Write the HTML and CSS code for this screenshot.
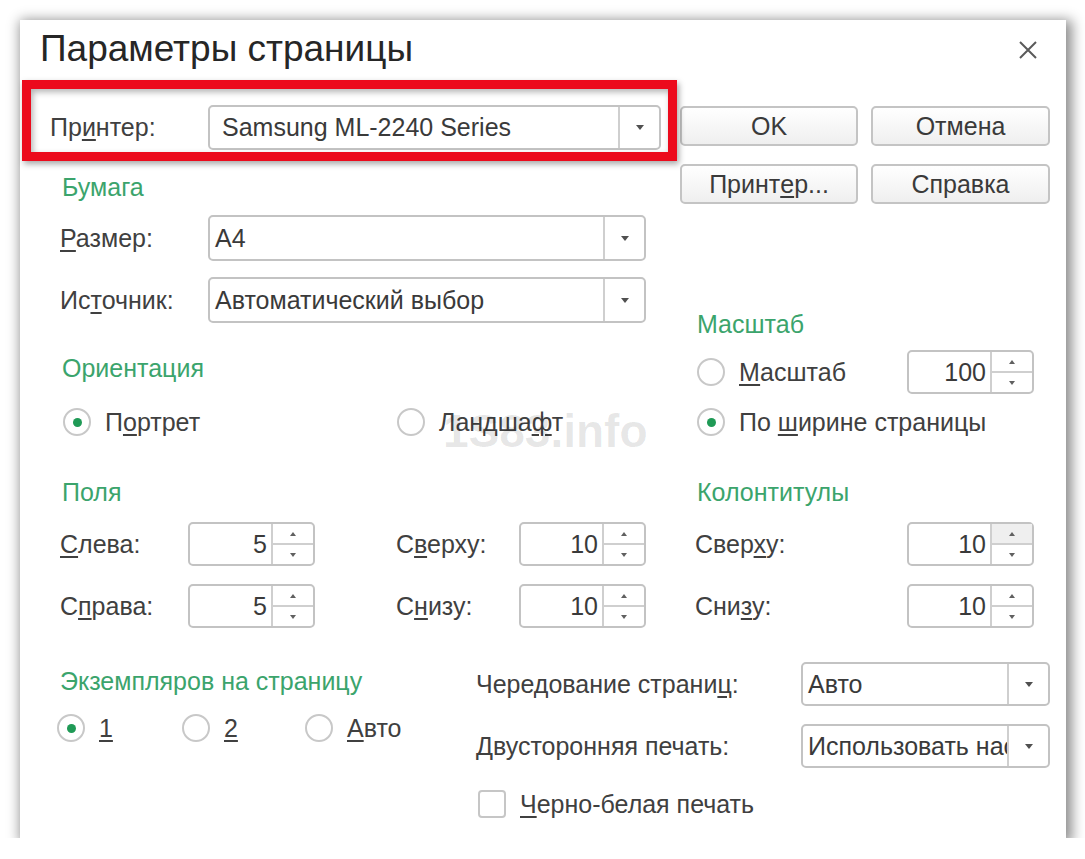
FILE: index.html
```html
<!DOCTYPE html>
<html lang="ru">
<head>
<meta charset="utf-8">
<title>Параметры страницы</title>
<link rel="stylesheet" href="styles.css">
</head>
<body>
<div class="dialog">
  <div class="header">
    <h1 class="title">Параметры страницы</h1>
    <div class="close">
      <svg width="20" height="20" viewBox="0 0 20 20"><path d="M2 2 L18 18 M18 2 L2 18" stroke="#5a5a5a" stroke-width="2" fill="none"/></svg>
    </div>
  </div>

  <div class="top">
    <div class="col-left">
      <div class="printer-row">
        <span class="label printer-label">Пр<u>и</u>нтер:</span>
        <div class="combo combo-printer"><span class="combo-text pad-l">Samsung ML-2240 Series</span><span class="combo-btn"><i class="tri-down"></i></span></div>
      </div>

      <div class="group-title g-paper">Бумага</div>
      <div class="field-row r-size">
        <span class="label w148"><u>Р</u>азмер:</span>
        <div class="combo combo-wide"><span class="combo-text">А4</span><span class="combo-btn"><i class="tri-down"></i></span></div>
      </div>
      <div class="field-row r-src">
        <span class="label w148">Ис<u>т</u>очник:</span>
        <div class="combo combo-wide"><span class="combo-text">Автоматический выбор</span><span class="combo-btn"><i class="tri-down"></i></span></div>
      </div>

      <div class="group-title g-orient">Ориентация</div>
      <div class="radio-row r-orient">
        <div class="radio-item w334"><span class="radio on"></span><span class="rtext">П<u>о</u>ртрет</span></div>
        <div class="radio-item"><span class="radio"></span><span class="rtext">Ландша<u>ф</u>т</span></div>
      </div>

      <div class="group-title g-fields">Поля</div>
      <div class="field-row r-m1">
        <span class="label w128"><u>С</u>лева:</span>
        <div class="spin"><span class="spin-val">5</span><span class="spin-btns"><span class="sb"><i class="tri-up"></i></span><span class="sb"><i class="tri-dn"></i></span></span></div>
        <span class="label w123 gap81">С<u>в</u>ерху:</span>
        <div class="spin"><span class="spin-val">10</span><span class="spin-btns"><span class="sb"><i class="tri-up"></i></span><span class="sb"><i class="tri-dn"></i></span></span></div>
      </div>
      <div class="field-row r-m2">
        <span class="label w128">С<u>п</u>рава:</span>
        <div class="spin"><span class="spin-val">5</span><span class="spin-btns"><span class="sb"><i class="tri-up"></i></span><span class="sb"><i class="tri-dn"></i></span></span></div>
        <span class="label w123 gap81">С<u>н</u>изу:</span>
        <div class="spin"><span class="spin-val">10</span><span class="spin-btns"><span class="sb"><i class="tri-up"></i></span><span class="sb"><i class="tri-dn"></i></span></span></div>
      </div>
    </div>

    <div class="col-right">
      <div class="buttons">
        <div class="btn">OK</div>
        <div class="btn">Отмена</div>
        <div class="btn">Принт<u>е</u>р...</div>
        <div class="btn">Справка</div>
      </div>

      <div class="group-title rg g-scale">Масштаб</div>
      <div class="radio-row r-scale1">
        <div class="radio-item w210"><span class="radio"></span><span class="rtext"><u>М</u>асштаб</span></div>
        <div class="spin"><span class="spin-val">100</span><span class="spin-btns"><span class="sb"><i class="tri-up"></i></span><span class="sb"><i class="tri-dn"></i></span></span></div>
      </div>
      <div class="radio-row r-scale2">
        <div class="radio-item"><span class="radio on"></span><span class="rtext">По <u>ш</u>ирине страницы</span></div>
      </div>

      <div class="group-title rg g-hf">Колонтитулы</div>
      <div class="field-row hf r-h1">
        <span class="label w212">Свер<u>х</u>у:</span>
        <div class="spin"><span class="spin-val">10</span><span class="spin-btns"><span class="sb hover"><i class="tri-up"></i></span><span class="sb"><i class="tri-dn"></i></span></span></div>
      </div>
      <div class="field-row hf r-h2">
        <span class="label w212">Сни<u>з</u>у:</span>
        <div class="spin"><span class="spin-val">10</span><span class="spin-btns"><span class="sb"><i class="tri-up"></i></span><span class="sb"><i class="tri-dn"></i></span></span></div>
      </div>
    </div>
  </div>

  <div class="bottom">
    <div class="bottom-left">
      <div class="group-title g-copies">Экземпляров на страницу</div>
      <div class="radio-row r-copies">
        <div class="radio-item w125"><span class="radio on"></span><span class="rtext"><u>1</u></span></div>
        <div class="radio-item w123r"><span class="radio"></span><span class="rtext"><u>2</u></span></div>
        <div class="radio-item"><span class="radio"></span><span class="rtext"><u>А</u>вто</span></div>
      </div>
    </div>
    <div class="bottom-right">
      <div class="field-row br r-alt">
        <span class="label w325">Чередование страни<u>ц</u>:</span>
        <div class="combo combo-small"><span class="combo-text">Авто</span><span class="combo-btn"><i class="tri-down"></i></span></div>
      </div>
      <div class="field-row br r-duplex">
        <span class="label w325">Двусторонняя печать:</span>
        <div class="combo combo-small"><span class="combo-text">Использовать настройки принтера</span><span class="combo-btn"><i class="tri-down"></i></span></div>
      </div>
      <div class="check-row">
        <span class="checkbox"></span><span class="rtext"><u>Ч</u>ерно-белая печать</span>
      </div>
    </div>
  </div>

  <div class="watermark">1S83.info</div>
  <div class="highlight"></div>
</div>
</body>
</html>
```

FILE: styles.css
```css
html, body {
  margin: 0;
  padding: 0;
  background: #ffffff;
}
body {
  font-family: "Liberation Sans", Arial, sans-serif;
  font-size: 25px;
  color: #404040;
}
u {
  text-decoration: underline;
  text-underline-offset: 3px;
  text-decoration-thickness: 2px;
}

.dialog {
  position: relative;
  width: 1046px;
  height: 818px;
  margin: 20px 0 0 20px;
  background: #ffffff;
  box-shadow: 3px 3px 12px 3px rgba(0, 0, 0, 0.45);
}

.header {
  height: 85px;
  display: flex;
  justify-content: space-between;
  align-items: flex-start;
}
.title {
  margin: 10px 0 0 20px;
  font-size: 37px;
  line-height: 37px;
  font-weight: normal;
  color: #262626;
}
.close {
  margin: 20px 28px 0 0;
  width: 20px;
  height: 20px;
}
.close svg { display: block; }

.top {
  display: grid;
  grid-template-columns: 660px 386px;
}
.col-left, .col-right {
  display: flex;
  flex-direction: column;
}

.label {
  white-space: nowrap;
  flex: none;
}
.w148 { width: 148px; }
.w128 { width: 128px; }
.w123 { width: 123px; }
.w212 { width: 212px; }
.w325 { width: 325px; }
.gap81 { margin-left: 81px; }

/* printer */
.printer-row {
  height: 45px;
  display: flex;
  align-items: center;
  padding-left: 30px;
}
.printer-label { width: 158px; }

/* combos */
.combo {
  box-sizing: border-box;
  display: flex;
  align-items: stretch;
  border: 2px solid #c3c3c3;
  border-radius: 5px;
  background: #ffffff;
  color: #3a3a3a;
  flex: none;
}
.combo-text {
  flex: 1;
  min-width: 0;
  overflow: hidden;
  white-space: nowrap;
  display: flex;
  align-items: center;
  padding-left: 5px;
}
.combo-text.pad-l { padding-left: 12px; }
.combo-btn {
  width: 39px;
  flex: none;
  border-left: 2px solid #cfcfcf;
  display: flex;
  align-items: center;
  justify-content: center;
}
.combo-printer { width: 453px; height: 45px; }
.combo-wide { width: 438px; height: 46px; }
.combo-small { width: 249px; height: 44px; }

.tri-down {
  width: 0;
  height: 0;
  border-left: 4px solid transparent;
  border-right: 4px solid transparent;
  border-top: 5px solid #505050;
}

/* group titles */
.group-title {
  height: 30px;
  line-height: 30px;
  color: #3ba46c;
  padding-left: 42px;
  white-space: nowrap;
}
.group-title.rg { padding-left: 17px; }
.g-paper { margin-top: 22px; }
.g-orient { margin-top: 30px; }
.g-fields { margin-top: 40px; }
.g-scale { margin-top: 105px; }
.g-hf { margin-top: 40px; }
.g-copies { padding-left: 40px; }

/* field rows */
.field-row {
  display: flex;
  align-items: center;
  padding-left: 40px;
}
.r-size { height: 46px; margin-top: 13px; }
.r-src { height: 46px; margin-top: 16px; }
.r-m1 { height: 44px; margin-top: 15px; }
.r-m2 { height: 44px; margin-top: 18px; }
.field-row.hf { padding-left: 15px; }
.r-h1 { height: 44px; margin-top: 15px; }
.r-h2 { height: 44px; margin-top: 18px; }

/* radios */
.radio-row {
  display: flex;
  align-items: center;
}
.r-orient { height: 30px; margin-top: 24px; padding-left: 43px; }
.r-scale1 { height: 44px; margin-top: 11px; padding-left: 17px; }
.r-scale2 { height: 30px; margin-top: 13px; padding-left: 17px; }
.r-copies { height: 30px; margin-top: 17px; padding-left: 37px; }
.radio-item {
  display: flex;
  align-items: center;
  flex: none;
}
.w334 { width: 334px; }
.w210 { width: 210px; }
.w125 { width: 125px; }
.w123r { width: 123px; }
.radio {
  box-sizing: border-box;
  width: 28px;
  height: 28px;
  border: 2px solid #c8c8c8;
  border-radius: 50%;
  background: #ffffff;
  display: flex;
  align-items: center;
  justify-content: center;
  flex: none;
}
.radio.on::after {
  content: "";
  width: 9px;
  height: 9px;
  border-radius: 50%;
  background: #1f9a56;
}
.rtext {
  margin-left: 14px;
  white-space: nowrap;
}

/* spinners */
.spin {
  box-sizing: border-box;
  width: 127px;
  height: 44px;
  border: 2px solid #c3c3c3;
  border-radius: 5px;
  display: flex;
  flex: none;
  background: #ffffff;
  color: #3a3a3a;
}
.spin-val {
  flex: 1;
  display: flex;
  align-items: center;
  justify-content: flex-end;
  padding-right: 4px;
}
.spin-btns {
  width: 40px;
  flex: none;
  border-left: 2px solid #cfcfcf;
  display: flex;
  flex-direction: column;
}
.sb {
  flex: 1;
  display: flex;
  align-items: center;
  justify-content: center;
}
.sb + .sb { border-top: 2px solid #cfcfcf; }
.sb.hover { background: #efefef; }
.tri-up, .tri-dn {
  width: 0;
  height: 0;
  border-left: 3px solid transparent;
  border-right: 3px solid transparent;
}
.tri-up { border-bottom: 4px solid #606060; }
.tri-dn { border-top: 4px solid #606060; }

/* buttons */
.buttons {
  display: grid;
  grid-template-columns: 178px 179px;
  grid-auto-rows: 40px;
  column-gap: 13px;
  row-gap: 18px;
  margin-top: 1px;
}
.btn {
  box-sizing: border-box;
  border: 2px solid #c4c4c4;
  border-radius: 5px;
  background: linear-gradient(#ffffff, #efefef);
  color: #3a3a3a;
  display: flex;
  align-items: center;
  justify-content: center;
  white-space: nowrap;
}

/* bottom */
.bottom {
  display: grid;
  grid-template-columns: 456px 590px;
}
.bottom-left { padding-top: 38px; }
.bottom-right { padding-top: 34px; }
.field-row.br { padding-left: 0; }
.r-alt { height: 44px; }
.r-duplex { height: 44px; margin-top: 18px; }
.check-row {
  display: flex;
  align-items: center;
  height: 28px;
  margin-top: 22px;
  padding-left: 2px;
}
.checkbox {
  box-sizing: border-box;
  width: 28px;
  height: 28px;
  border: 2px solid #c6c6c6;
  border-radius: 4px;
  flex: none;
}

/* overlays */
.watermark {
  position: absolute;
  left: 423px;
  top: 388px;
  font-size: 46px;
  line-height: 46px;
  font-weight: bold;
  color: rgba(0, 0, 0, 0.1);
  white-space: nowrap;
  pointer-events: none;
}
.highlight {
  position: absolute;
  left: 2px;
  top: 60px;
  width: 655px;
  height: 81px;
  box-sizing: border-box;
  border: 9px solid #ec0a1c;
  box-shadow: 2px 3px 6px rgba(0, 0, 0, 0.35), inset 2px 3px 6px rgba(0, 0, 0, 0.3);
  pointer-events: none;
}
```
